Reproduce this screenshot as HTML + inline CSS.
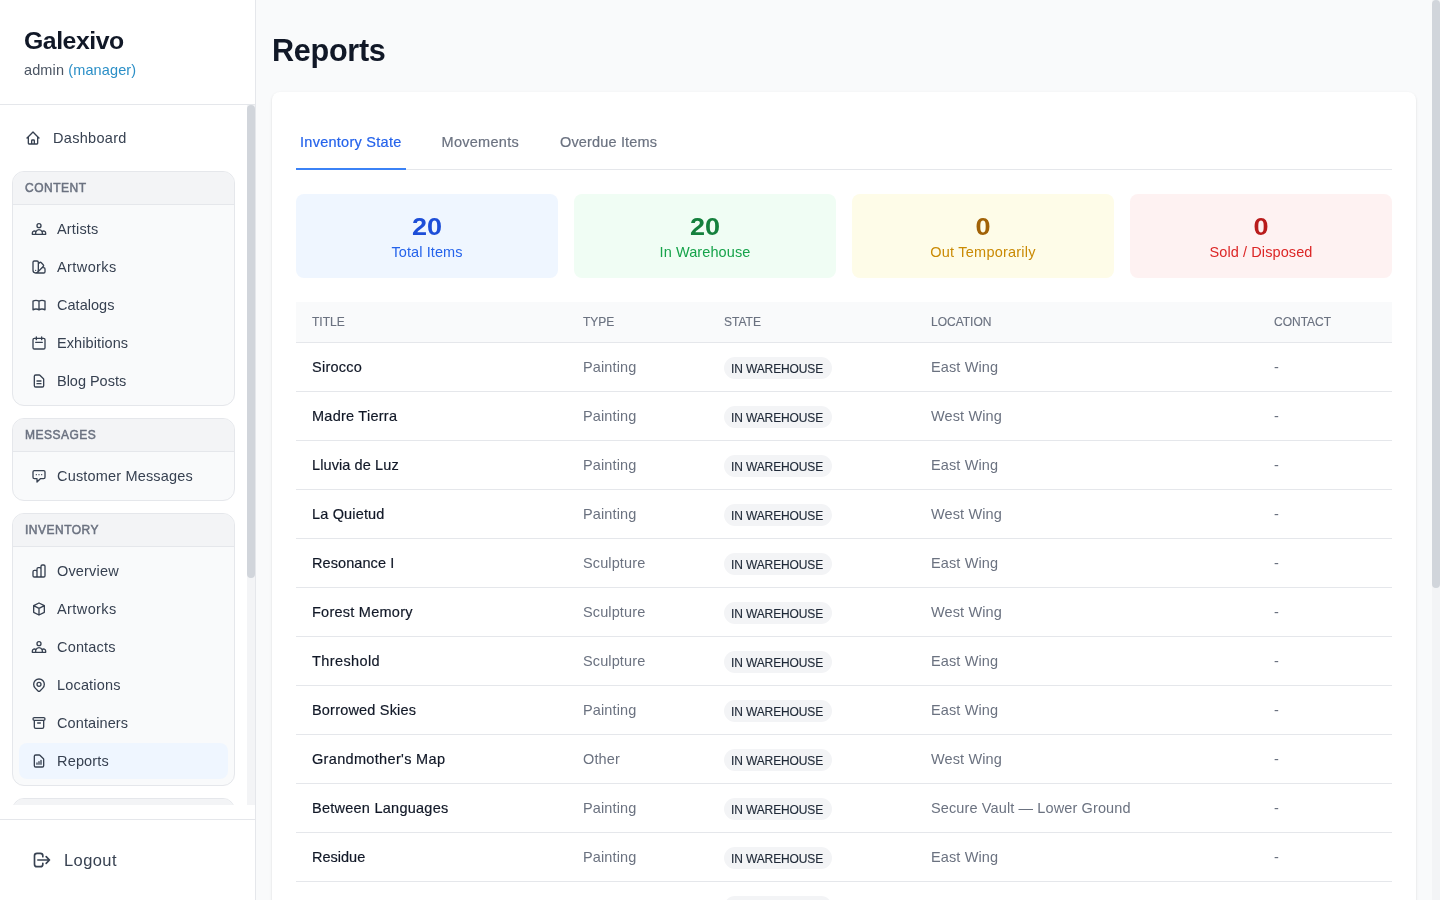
<!DOCTYPE html>
<html lang="en">
<head>
<meta charset="utf-8">
<title>Reports - Galexivo</title>
<style>
*{box-sizing:border-box;margin:0;padding:0}
html,body{width:1440px;height:900px;overflow:hidden}
body{font-family:"Liberation Sans",Arial,sans-serif;background:#f9fafb;color:#111827;position:relative;font-size:14px;line-height:20px}
a{text-decoration:none;color:inherit}
svg{display:block;flex:none}
.ic{width:16px;height:16px;fill:none;stroke:currentColor;stroke-width:2;stroke-linecap:round;stroke-linejoin:round}

/* ---------- sidebar ---------- */
#sidebar{will-change:transform;position:absolute;left:0;top:0;width:256px;height:900px;background:#fff;border-right:1px solid #e5e7eb}
#brand{height:105px;padding:24px;border-bottom:1px solid #e5e7eb}
#brand h1{font-size:24.8px;letter-spacing:-.45px;line-height:32px;font-weight:700;color:#111827;white-space:nowrap;position:relative;top:1px}
#brand p{font-size:14.5px;line-height:20px;color:#4b5563;margin-top:4px;white-space:nowrap;letter-spacing:.12px}
#brand p span{color:#2b8fc7}
#nav{position:absolute;left:0;top:105px;width:255px;height:700px;overflow:hidden;padding:12px 20px 0 12px}
#sbtrack{position:absolute;right:0;top:0;width:8px;height:700px;background:#f3f4f6}
#sbthumb{position:absolute;right:0;top:0;width:8px;height:473px;background:#d1d5db;border-radius:4px}
.dash{display:flex;align-items:center;height:42px;padding:0 12px 0 13px;color:#374151;font-size:14.5px;letter-spacing:.3px}
.dash svg{margin-right:12px}
.grp{margin-top:12px;border:1px solid #e5e7eb;border-radius:12px;background:#f9fafb;overflow:hidden}
.grp h3{height:33px;padding:8px 12px;border-bottom:1px solid #e5e7eb;background:#f3f4f6;font-size:12px;line-height:16px;font-weight:400;-webkit-text-stroke:.5px #6b7280;color:#6b7280;letter-spacing:.5px;text-transform:uppercase}
.grp ul{list-style:none;padding:6px}
.grp li{display:flex;align-items:center;height:36px;padding:0 12px;border-radius:8px;color:#374151;font-size:14.5px;letter-spacing:.17px;margin-bottom:2px;white-space:nowrap}
.grp li:last-child{margin-bottom:0}
.grp li svg{margin-right:10px}
.grp li.on{background:#eff6ff}
#foot{position:absolute;left:0;top:819px;width:255px;height:81px;border-top:1px solid #e5e7eb;padding:16px}
#foot a{display:flex;align-items:center;height:48px;padding:0 16px;font-size:16.5px;line-height:24px;color:#374151;letter-spacing:.4px}
#foot svg{width:20px;height:20px;margin-right:12px}

/* ---------- main ---------- */
#main{will-change:transform;position:absolute;left:256px;top:0;width:1176px;height:900px;overflow:hidden;padding:32px 16px 0}
#pgtrack{position:absolute;left:1432px;top:0;width:8px;height:900px;background:#f3f4f6}
#pgthumb{position:absolute;left:1432px;top:0;width:8px;height:588px;background:#d1d5db;border-radius:4px}
#main h2{font-size:30.6px;letter-spacing:-.3px;line-height:36px;font-weight:700;color:#111827;margin-bottom:24px;position:relative;top:0}
#card{background:#fff;border-radius:8px;box-shadow:0 1px 3px rgba(0,0,0,.1),0 1px 2px rgba(0,0,0,.06);padding:24px;height:1400px}
#tabs{display:flex;height:54px;border-bottom:1px solid #e5e7eb;margin-bottom:24px}
#tabs a{display:block;height:54px;padding:16px 4px 0;border-bottom:2px solid transparent;font-size:14.5px;letter-spacing:.27px;line-height:20px;color:#6b7280;margin-right:32px;white-space:nowrap}
#tabs a{-webkit-text-stroke:.2px #6b7280}
#tabs a.on{color:#2563eb;border-bottom-color:#3b82f6;-webkit-text-stroke-color:#2563eb}
#stats{display:flex;gap:16px;margin-bottom:24px}
.st{flex:1;height:84px;border-radius:8px;padding:16px;text-align:center}
.st b{display:block;font-size:24.6px;line-height:32px;font-weight:700;transform:scaleX(1.1);position:relative;top:.6px}
.st span{display:block;font-size:14.5px;letter-spacing:.1px;line-height:20px}
.s1{background:#eff6ff}.s1 b{color:#1d4ed8}.s1 span{color:#2563eb}
.s2{background:#f0fdf4}.s2 b{color:#15803d}.s2 span{color:#16a34a}
.s3{background:#fefce8}.s3 b{color:#a16207}.s3 span{color:#ca8a04}
.s4{background:#fef2f2}.s4 b{color:#b91c1c}.s4 span{color:#dc2626}
table{width:1096px;border-collapse:collapse;table-layout:fixed}
th{height:40px;background:#f9fafb;text-align:left;padding:0 16px;font-size:12px;line-height:16px;font-weight:400;color:#6b7280;letter-spacing:0;text-transform:uppercase;-webkit-text-stroke:.15px #6b7280}
td{height:49px;padding:0 16px;border-top:1px solid #e5e7eb;font-size:14.5px;letter-spacing:.12px;line-height:20px;color:#6b7280;white-space:nowrap}
tbody tr:last-child td:not(:nth-child(3)){padding-top:5px}
td.t{color:#111827;letter-spacing:.25px;-webkit-text-stroke:.18px #111827}
.bdg{display:inline-block;height:22px;padding:4px 9px 2px 7px;border-radius:11px;background:#f3f4f6;color:#1f2937;font-size:12px;letter-spacing:-.12px;line-height:16px;position:relative;top:1px;-webkit-text-stroke:.15px #1f2937}
</style>
</head>
<body>
<aside id="sidebar">
  <div id="brand">
    <h1>Galexivo</h1>
    <p>admin <span>(manager)</span></p>
  </div>
  <nav id="nav">
    <a class="dash"><svg class="ic" viewBox="0 0 24 24"><path d="M3 12l2-2m0 0l7-7 7 7M5 10v10a1 1 0 001 1h3m10-11l2 2m-2-2v10a1 1 0 01-1 1h-3m-6 0a1 1 0 001-1v-4a1 1 0 011-1h2a1 1 0 011 1v4a1 1 0 001 1m-6 0h6"/></svg>Dashboard</a>
    <div class="grp">
      <h3>Content</h3>
      <ul>
        <li><svg class="ic" viewBox="0 0 24 24"><path d="M17 20h5v-2a3 3 0 00-5.356-1.857M17 20H7m10 0v-2c0-.656-.126-1.283-.356-1.857M7 20H2v-2a3 3 0 015.356-1.857M7 20v-2c0-.656.126-1.283.356-1.857m0 0a5.002 5.002 0 019.288 0M15 7a3 3 0 11-6 0 3 3 0 016 0z"/></svg>Artists</li>
        <li style="letter-spacing:.41px"><svg class="ic" viewBox="0 0 24 24"><path d="M7 21a4 4 0 01-4-4V5a2 2 0 012-2h4a2 2 0 012 2v12a4 4 0 01-4 4zm0 0h12a2 2 0 002-2v-4a2 2 0 00-2-2h-2.343M11 7.343l1.657-1.657a2 2 0 012.828 0l2.829 2.829a2 2 0 010 2.828l-8.486 8.485M7 17h.01"/></svg>Artworks</li>
        <li style="letter-spacing:.03px"><svg class="ic" viewBox="0 0 24 24"><path d="M12 6.253v13m0-13C10.832 5.477 9.246 5 7.5 5S4.168 5.477 3 6.253v13C4.168 18.477 5.754 18 7.5 18s3.332.477 4.500 1.253m0-13C13.168 5.477 14.754 5 16.5 5c1.747 0 3.332.477 4.5 1.253v13C19.832 18.477 18.247 18 16.5 18c-1.746 0-3.332.477-4.5 1.253"/></svg>Catalogs</li>
        <li style="letter-spacing:.1px"><svg class="ic" viewBox="0 0 24 24"><path d="M8 7V3m8 4V3m-9 8h10M5 21h14a2 2 0 002-2V7a2 2 0 00-2-2H5a2 2 0 00-2 2v12a2 2 0 002 2z"/></svg>Exhibitions</li>
        <li style="letter-spacing:-.02px"><svg class="ic" viewBox="0 0 24 24"><path d="M9 12h6m-6 4h6m2 5H7a2 2 0 01-2-2V5a2 2 0 012-2h5.586a1 1 0 01.707.293l5.414 5.414a1 1 0 01.293.707V19a2 2 0 01-2 2z"/></svg>Blog Posts</li>
      </ul>
    </div>
    <div class="grp">
      <h3>Messages</h3>
      <ul>
        <li><svg class="ic" viewBox="0 0 24 24"><path d="M8 10h.01M12 10h.01M16 10h.01M9 16H5a2 2 0 01-2-2V6a2 2 0 012-2h14a2 2 0 012 2v8a2 2 0 01-2 2h-5l-5 5v-5z"/></svg>Customer Messages</li>
      </ul>
    </div>
    <div class="grp">
      <h3>Inventory</h3>
      <ul>
        <li><svg class="ic" viewBox="0 0 24 24"><path d="M9 19v-6a2 2 0 00-2-2H5a2 2 0 00-2 2v6a2 2 0 002 2h2a2 2 0 002-2zm0 0V9a2 2 0 012-2h2a2 2 0 012 2v10m-6 0a2 2 0 002 2h2a2 2 0 002-2m0 0V5a2 2 0 012-2h2a2 2 0 012 2v14a2 2 0 01-2 2h-2a2 2 0 01-2-2z"/></svg>Overview</li>
        <li style="letter-spacing:.41px"><svg class="ic" viewBox="0 0 24 24"><path d="M20 7l-8-4-8 4m16 0l-8 4m8-4v10l-8 4m0-10L4 7m8 4v10M4 7v10l8 4"/></svg>Artworks</li>
        <li><svg class="ic" viewBox="0 0 24 24"><path d="M17 20h5v-2a3 3 0 00-5.356-1.857M17 20H7m10 0v-2c0-.656-.126-1.283-.356-1.857M7 20H2v-2a3 3 0 015.356-1.857M7 20v-2c0-.656.126-1.283.356-1.857m0 0a5.002 5.002 0 019.288 0M15 7a3 3 0 11-6 0 3 3 0 016 0z"/></svg>Contacts</li>
        <li><svg class="ic" viewBox="0 0 24 24"><path d="M17.657 16.657L13.414 20.9a1.998 1.998 0 01-2.827 0l-4.244-4.243a8 8 0 1111.314 0z"/><path d="M15 11a3 3 0 11-6 0 3 3 0 016 0z"/></svg>Locations</li>
        <li style="letter-spacing:.1px"><svg class="ic" viewBox="0 0 24 24"><path d="M5 8h14M5 8a2 2 0 110-4h14a2 2 0 110 4M5 8v10a2 2 0 002 2h10a2 2 0 002-2V8m-9 4h4"/></svg>Containers</li>
        <li class="on"><svg class="ic" viewBox="0 0 24 24"><path d="M9 17v-2m3 2v-4m3 4v-6m2 10H7a2 2 0 01-2-2V5a2 2 0 012-2h5.586a1 1 0 01.707.293l5.414 5.414a1 1 0 01.293.707V19a2 2 0 01-2 2z"/></svg>Reports</li>
      </ul>
    </div>
    <div class="grp">
      <h3>System</h3>
      <ul>
        <li>Settings</li>
      </ul>
    </div>
    <div id="sbtrack"></div>
    <div id="sbthumb"></div>
  </nav>
  <div id="foot">
    <a><svg class="ic" viewBox="0 0 24 24"><path d="M17 16l4-4m0 0l-4-4m4 4H7m6 4v1a3 3 0 01-3 3H6a3 3 0 01-3-3V7a3 3 0 013-3h4a3 3 0 013 3v1"/></svg>Logout</a>
  </div>
</aside>

<main id="main">
  <h2>Reports</h2>
  <section id="card">
    <div id="tabs">
      <a class="on">Inventory State</a>
      <a>Movements</a>
      <a style="margin-left:1px;letter-spacing:.16px">Overdue Items</a>
    </div>
    <div id="stats">
      <div class="st s1"><b>20</b><span>Total Items</span></div>
      <div class="st s2"><b>20</b><span>In Warehouse</span></div>
      <div class="st s3"><b>0</b><span style="letter-spacing:.22px">Out Temporarily</span></div>
      <div class="st s4"><b>0</b><span>Sold / Disposed</span></div>
    </div>
    <table>
      <colgroup><col style="width:271px"><col style="width:141px"><col style="width:207px"><col style="width:343px"><col style="width:134px"></colgroup>
      <thead><tr><th>Title</th><th>Type</th><th>State</th><th>Location</th><th>Contact</th></tr></thead>
      <tbody>
        <tr><td class="t">Sirocco</td><td>Painting</td><td><span class="bdg">IN WAREHOUSE</span></td><td>East Wing</td><td>-</td></tr>
        <tr><td class="t">Madre Tierra</td><td>Painting</td><td><span class="bdg">IN WAREHOUSE</span></td><td>West Wing</td><td>-</td></tr>
        <tr><td class="t" style="letter-spacing:.1px">Lluvia de Luz</td><td>Painting</td><td><span class="bdg">IN WAREHOUSE</span></td><td>East Wing</td><td>-</td></tr>
        <tr><td class="t" style="letter-spacing:.16px">La Quietud</td><td>Painting</td><td><span class="bdg">IN WAREHOUSE</span></td><td>West Wing</td><td>-</td></tr>
        <tr><td class="t" style="letter-spacing:.08px">Resonance I</td><td>Sculpture</td><td><span class="bdg">IN WAREHOUSE</span></td><td>East Wing</td><td>-</td></tr>
        <tr><td class="t">Forest Memory</td><td>Sculpture</td><td><span class="bdg">IN WAREHOUSE</span></td><td>West Wing</td><td>-</td></tr>
        <tr><td class="t" style="letter-spacing:.4px">Threshold</td><td>Sculpture</td><td><span class="bdg">IN WAREHOUSE</span></td><td>East Wing</td><td>-</td></tr>
        <tr><td class="t" style="letter-spacing:.19px">Borrowed Skies</td><td>Painting</td><td><span class="bdg">IN WAREHOUSE</span></td><td>East Wing</td><td>-</td></tr>
        <tr><td class="t" style="letter-spacing:.33px">Grandmother's Map</td><td>Other</td><td><span class="bdg">IN WAREHOUSE</span></td><td>West Wing</td><td>-</td></tr>
        <tr><td class="t">Between Languages</td><td>Painting</td><td><span class="bdg">IN WAREHOUSE</span></td><td>Secure Vault — Lower Ground</td><td>-</td></tr>
        <tr><td class="t" style="letter-spacing:0">Residue</td><td>Painting</td><td><span class="bdg">IN WAREHOUSE</span></td><td>East Wing</td><td>-</td></tr>
        <tr><td class="t">Inheritance</td><td>Painting</td><td><span class="bdg">IN WAREHOUSE</span></td><td>West Wing</td><td>-</td></tr>
      </tbody>
    </table>
  </section>
</main>
<div id="pgtrack"></div>
<div id="pgthumb"></div>
</body>
</html>
